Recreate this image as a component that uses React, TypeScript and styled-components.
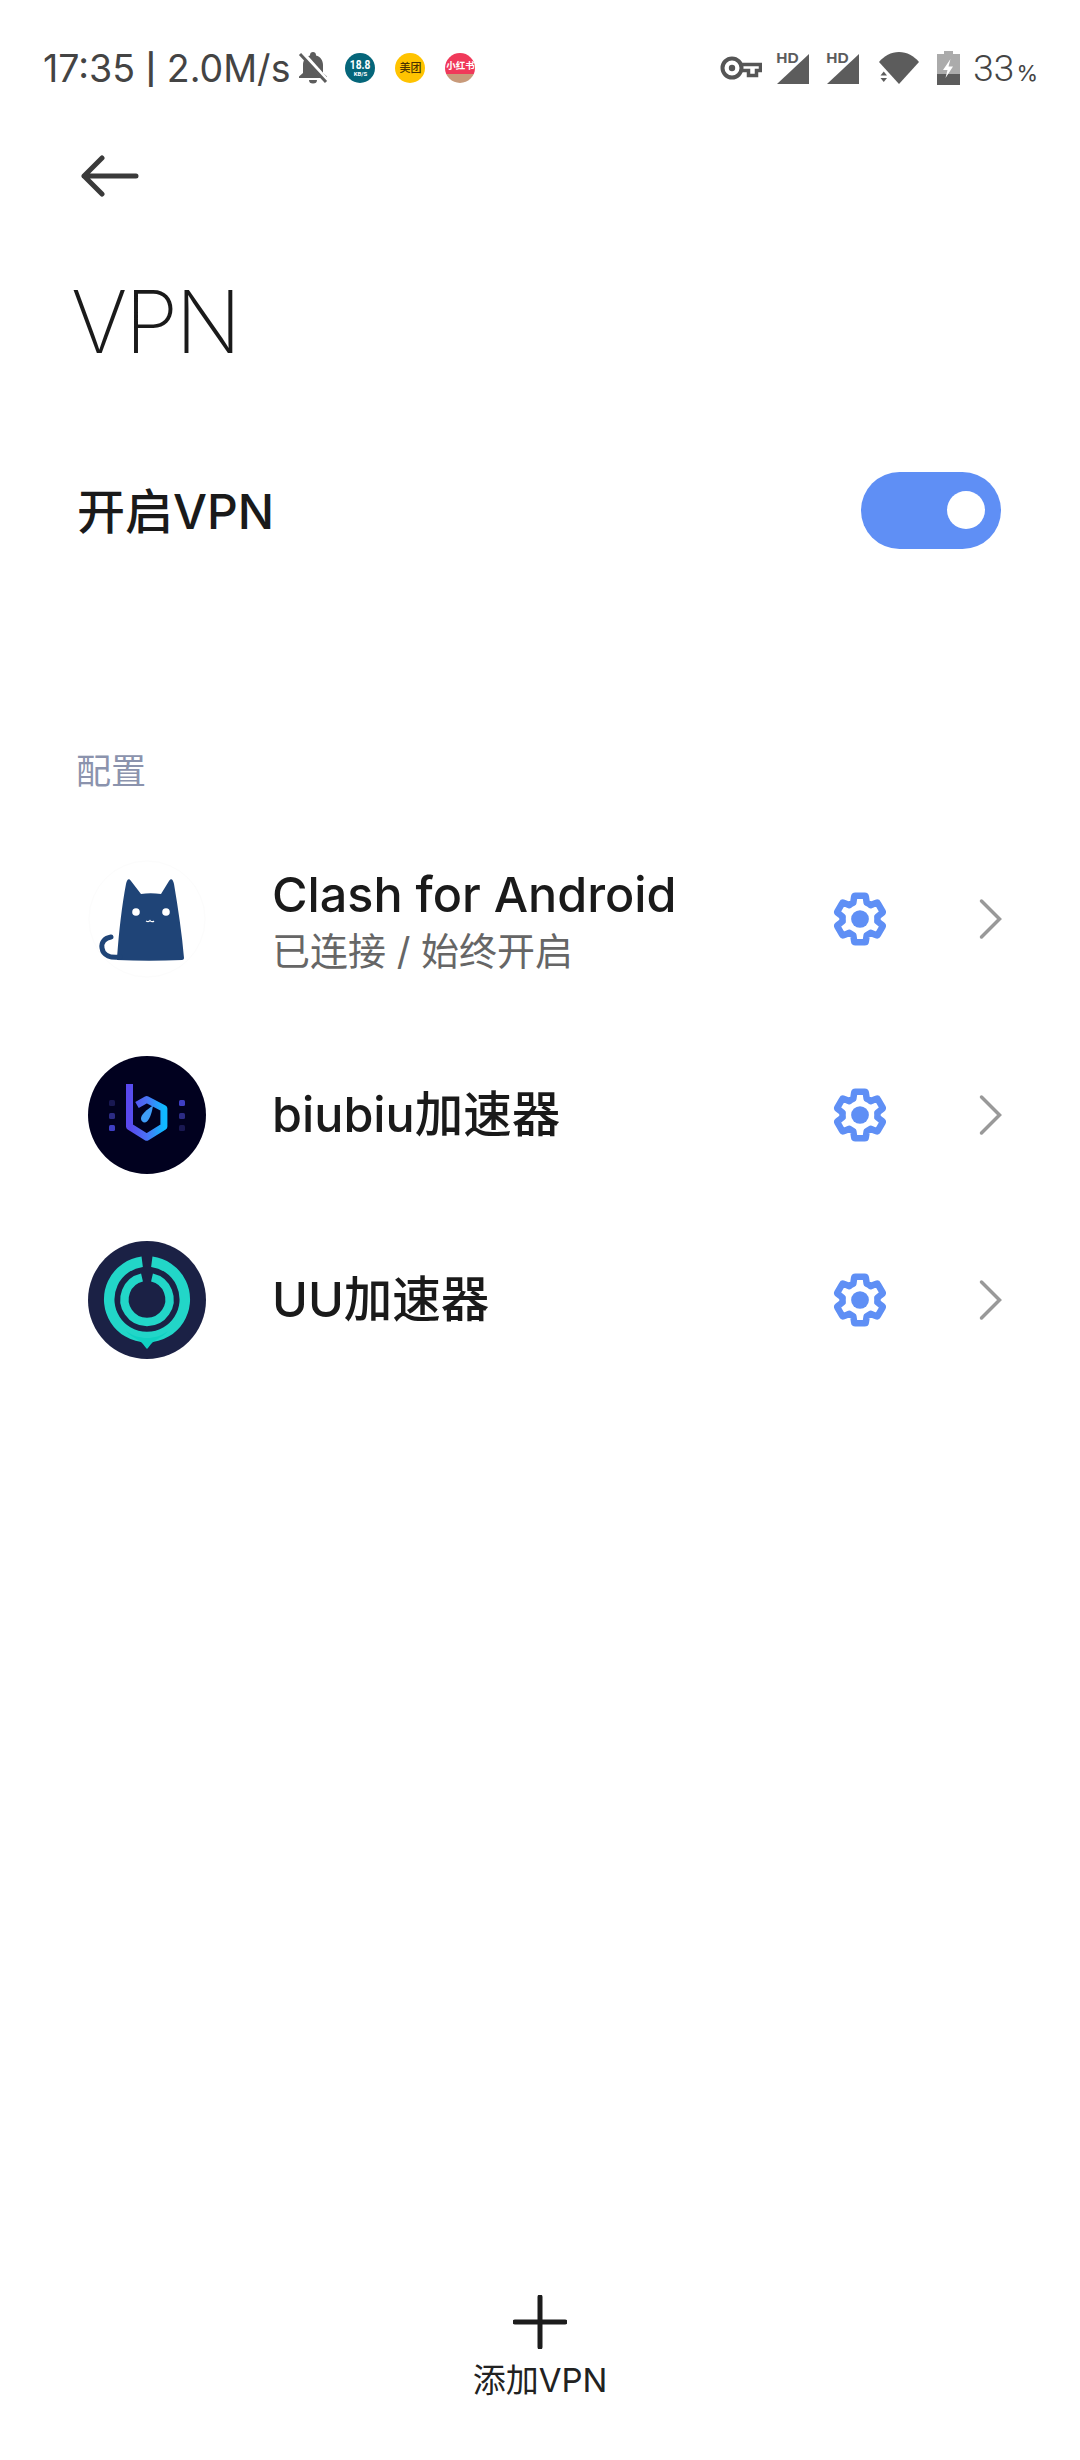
import styled, { createGlobalStyle } from "styled-components";

const GlobalStyle = createGlobalStyle`
  html, body {
    margin: 0;
    padding: 0;
    background: #fff;
  }
  body {
    font-family: Inter, "Noto Sans CJK SC", sans-serif;
  }
`;

const profiles = [
  { id: "clash", name: "Clash for Android", status: "已连接 / 始终开启" },
  { id: "biubiu", name: "biubiu加速器" },
  { id: "uu", name: "UU加速器" },
];

function SlashedBell() {
  return (
    <svg width="30" height="34" viewBox="0 0 30 34">
      <path
        d="M15 1c-1.700 0-3 1.300-3 3v.600C7.500 5.800 5 9.600 5 14v8l-4 3.500V27h28v-1.500L25 22v-8c0-4.400-2.500-8.200-7-9.400V4c0-1.700-1.300-3-3-3z"
        fill="#5c5c5c"
      />
      <path d="M11 29h8a4 3.500 0 0 1-8 0z" fill="#5c5c5c" />
      <path d="M4 2l25 28" stroke="#fff" strokeWidth="5" />
      <path d="M2 3l26 28" stroke="#5c5c5c" strokeWidth="3" />
    </svg>
  );
}

function KeyIcon() {
  return (
    <svg width="42" height="24" viewBox="0 0 42 24">
      <circle cx="12" cy="12" r="9.500" fill="none" stroke="#555" strokeWidth="4" />
      <circle cx="12" cy="12" r="3.200" fill="#555" />
      <path d="M22 8.500h18.500v6h-4v5h-8v-5H22" fill="none" stroke="#555" strokeWidth="3.500" />
    </svg>
  );
}

function SignalIcon() {
  return (
    <SignalWrap>
      <svg width="36" height="32" viewBox="0 0 36 32">
        <path d="M2 32L34 2v30z" fill="#5c5c5c" />
      </svg>
      <HdLabel>HD</HdLabel>
    </SignalWrap>
  );
}

function WifiIcon() {
  return (
    <svg width="42" height="34" viewBox="0 0 42 34">
      <path d="M1 11C6 5 13 1 21 1s15 4 20 10L21 33z" fill="#5c5c5c" />
      <path d="M2.500 24.500h6.500l-3.250-4zM2.500 27h6.500l-3.250 4z" fill="#5c5c5c" />
    </svg>
  );
}

function BatteryIcon() {
  return (
    <svg width="23" height="34" viewBox="0 0 23 34">
      <path d="M7 0h9v3h7v22H0V3h7z" fill="#ababab" />
      <path d="M0 23h23v11H0z" fill="#5c5c5c" />
      <path d="M13.500 8L6 19h4.500l-2 8L16 15.500h-4.500z" fill="#fff" />
    </svg>
  );
}

function GearIcon() {
  return (
    <svg width="56" height="56" viewBox="0 0 24 24">
      <path
        d="M19.430 12.980c.040-.320.070-.640.070-.980s-.030-.660-.070-.980l2.110-1.650c.190-.150.240-.420.120-.640l-2-3.460c-.120-.220-.390-.300-.610-.220l-2.490 1c-.520-.400-1.080-.730-1.690-.980l-.380-2.650C14.460 2.180 14.250 2 14 2h-4c-.250 0-.460.180-.490.420l-.380 2.650c-.610.250-1.170.590-1.690.980l-2.490-1c-.230-.090-.490 0-.610.220l-2 3.460c-.130.220-.070.490.120.640l2.110 1.650c-.040.320-.070.650-.070.980s.030.660.070.980l-2.110 1.650c-.190.150-.240.420-.120.640l2 3.460c.120.220.390.300.610.220l2.490-1c.520.400 1.080.730 1.690.980l.380 2.650c.030.240.240.420.490.420h4c.250 0 .460-.180.490-.420l.380-2.650c.610-.250 1.170-.590 1.690-.980l2.490 1c.230.090.490 0 .610-.220l2-3.460c.120-.220.070-.490-.120-.640l-2.110-1.650z"
        fill="none"
        stroke="#5f8ff5"
        strokeWidth="2.800"
        strokeLinejoin="round"
      />
      <circle cx="12" cy="12" r="3.800" fill="#5f8ff5" />
    </svg>
  );
}

function Chevron() {
  return (
    <svg width="23" height="42" viewBox="0 0 23 42">
      <path d="M2.500 3l18 18-18 18" fill="none" stroke="#999" strokeWidth="3.500" strokeLinecap="round" />
    </svg>
  );
}

function ClashLogo() {
  return (
    <svg width="118" height="118" viewBox="0 0 118 118">
      <circle cx="59" cy="59" r="58" fill="#fff" stroke="#fcfcfc" />
      <path
        d="M29 98C31 70 34 45 38 24c1-5 3-6 5-3l10 13c6-1 13-1 20 0l8-13c2-3 4-2 5 3 4 24 8 50 10 74 0 1-1 2-2 2-22 1-44 1-65 0z"
        fill="#1f4477"
      />
      <path d="M32 97c-9 1-17-1-18-9-1-6 3-10 9-11" fill="none" stroke="#1f4477" strokeWidth="5" strokeLinecap="round" />
      <circle cx="48" cy="52" r="3.800" fill="#fff" />
      <circle cx="78" cy="52" r="3.800" fill="#fff" />
      <path d="M58 61c2 1 3 1 4-.500 1 1.500 3 1.500 4 .500" fill="none" stroke="#fff" strokeWidth="1.200" />
    </svg>
  );
}

function BiubiuLogo() {
  return (
    <svg width="118" height="118" viewBox="0 0 118 118">
      <defs>
        <linearGradient id="biuStroke" x1="0" y1="0" x2="1" y2="0">
          <stop offset="0" stopColor="#5a48ee" />
          <stop offset="0.500" stopColor="#4a72f5" />
          <stop offset="1" stopColor="#0fb9ff" />
        </linearGradient>
      </defs>
      <circle cx="59" cy="59" r="59" fill="#01011f" />
      <path
        d="M41.500 28v42.500l17.200 10.800 17.200-10.800V52.500L58.700 43.500 49 49"
        fill="none"
        stroke="url(#biuStroke)"
        strokeWidth="7"
        strokeLinejoin="round"
      />
      <path d="M65 49.500c-1 7-3 13-6 16-2.500 2-6 .500-6-3 0-4 6-9 12-13z" fill="#3f9df8" />
      <rect x="21" y="44" width="6" height="6" rx="1.500" fill="#191852" />
      <rect x="21" y="57" width="6" height="6" rx="1.500" fill="#2c2b85" />
      <rect x="21" y="69" width="6" height="6" rx="1.500" fill="#3f3fc4" />
      <rect x="91" y="44" width="6" height="6" rx="1.500" fill="#3f3fc4" />
      <rect x="91" y="57" width="6" height="6" rx="1.500" fill="#2c2b85" />
      <rect x="91" y="69" width="6" height="6" rx="1.500" fill="#191852" />
    </svg>
  );
}

function UULogo() {
  return (
    <svg width="118" height="118" viewBox="0 0 118 118">
      <circle cx="59" cy="59" r="59" fill="#1b2145" />
      <path d="M54.200 20.800A37.800 37.800 0 1 0 63.800 20.800" fill="none" stroke="#22d6c8" strokeWidth="10.500" />
      <path d="M54 36.500A22.500 22.500 0 1 0 64 36.500" fill="none" stroke="#22d6c8" strokeWidth="8.400" />
      <path d="M38 90c7 5 14 7 21 7s14-2 21-7c-6 7-14 9-16 12-2 2-3 4-5 6-2-2-3-4-5-6-2-3-10-5-16-12z" fill="#10d2c2" />
    </svg>
  );
}

const logos: Record<string, () => React.ReactElement> = {
  clash: ClashLogo,
  biubiu: BiubiuLogo,
  uu: UULogo,
};

export default function App() {
  return (
    <Page>
      <GlobalStyle />
      <StatusBar>
        <StatusLeft>
          <Clock>
            17:35 <Separator>|</Separator> 2.0M/s
          </Clock>
          <SlashedBell />
          <Badges>
            <SpeedBadge>
              <strong>18.8</strong>
              <span>KB/S</span>
            </SpeedBadge>
            <MeituanBadge>美团</MeituanBadge>
            <RedBookBadge>小红书</RedBookBadge>
          </Badges>
        </StatusLeft>
        <StatusRight>
          <StatusSlot $gap={0}>
            <KeyIcon />
          </StatusSlot>
          <StatusSlot $gap={13}>
            <SignalIcon />
          </StatusSlot>
          <StatusSlot $gap={14}>
            <SignalIcon />
          </StatusSlot>
          <StatusSlot $gap={17}>
            <WifiIcon />
          </StatusSlot>
          <StatusSlot $gap={17}>
            <BatteryIcon />
          </StatusSlot>
          <StatusSlot $gap={13}>
            <BatteryText>
              33<small>%</small>
            </BatteryText>
          </StatusSlot>
        </StatusRight>
      </StatusBar>

      <BackButton>
        <svg width="58" height="42" viewBox="0 0 58 42">
          <path d="M55 21H3M21 3L3 21l18 18" fill="none" stroke="#3a3a3a" strokeWidth="5" strokeLinecap="round" strokeLinejoin="round" />
        </svg>
      </BackButton>

      <Title>VPN</Title>

      <SwitchRow>
        <SwitchLabel>开启VPN</SwitchLabel>
        <Toggle>
          <Knob />
        </Toggle>
      </SwitchRow>

      <SectionLabel>配置</SectionLabel>

      <ProfileList>
        {profiles.map((p) => {
          const Logo = logos[p.id];
          return (
            <ProfileRow key={p.id} $tall={!!p.status}>
              <LogoSlot>
                <Logo />
              </LogoSlot>
              <ProfileText>
                <ProfileName>{p.name}</ProfileName>
                {p.status && <ProfileStatus>{p.status}</ProfileStatus>}
              </ProfileText>
              <GearSlot>
                <GearIcon />
              </GearSlot>
              <Chevron />
            </ProfileRow>
          );
        })}
      </ProfileList>

      <AddButton>
        <svg width="54" height="54" viewBox="0 0 54 54">
          <path d="M27 2v50M2 27h50" stroke="#1c1c1c" strokeWidth="5" strokeLinecap="round" />
        </svg>
        <AddLabel>添加VPN</AddLabel>
      </AddButton>
    </Page>
  );
}

const Page = styled.div`
  display: flex;
  flex-direction: column;
  height: 2460px;
  background: #fff;
  overflow: hidden;
`;

const StatusBar = styled.div`
  display: flex;
  justify-content: space-between;
  align-items: center;
  height: 136px;
  padding: 0 42px 0 43px;
  flex-shrink: 0;
`;

const StatusLeft = styled.div`
  display: flex;
  align-items: center;
  gap: 8px;
`;

const Clock = styled.span`
  font-size: 37.5px;
  color: #444;
  white-space: nowrap;
`;

const Separator = styled.span`
  font-size: 30px;
  font-weight: 600;
  vertical-align: 2px;
`;

const Badges = styled.div`
  display: flex;
  gap: 20px;
  margin-left: 9px;
`;

const RoundBadge = styled.div`
  display: flex;
  flex-direction: column;
  align-items: center;
  justify-content: center;
  width: 30px;
  height: 30px;
  border-radius: 50%;
  overflow: hidden;
  line-height: 1;
`;

const SpeedBadge = styled(RoundBadge)`
  background: #05667a;
  color: #fff;
  font-family: "Roboto", sans-serif;

  strong {
    font-size: 12px;
    transform: scaleX(0.85);
  }

  span {
    font-size: 6px;
    font-weight: 700;
  }
`;

const MeituanBadge = styled(RoundBadge)`
  background: #ffc300;
  color: #4a3200;
  font-size: 11px;
  font-weight: 500;
`;

const RedBookBadge = styled(RoundBadge)`
  background: linear-gradient(180deg, #f0395a 0 70%, #c89a7a 70% 100%);
  color: #fff;
  font-size: 9.5px;
  font-weight: 700;
  white-space: nowrap;
  padding-bottom: 4px;
  box-sizing: border-box;
`;

const StatusRight = styled.div`
  display: flex;
  align-items: center;
`;

const StatusSlot = styled.div<{ $gap: number }>`
  display: flex;
  align-items: center;
  margin-left: ${(p) => p.$gap}px;
`;

const SignalWrap = styled.div`
  position: relative;
  display: flex;
`;

const HdLabel = styled.span`
  position: absolute;
  top: -1px;
  left: 1px;
  font-family: "Liberation Sans", sans-serif;
  font-size: 15.5px;
  line-height: 14px;
  font-weight: 700;
  color: #5c5c5c;
`;

const BatteryText = styled.span`
  font-family: Roboto, sans-serif;
  font-size: 37px;
  font-weight: 300;
  color: #444;
  white-space: nowrap;

  small {
    font-family: Inter, sans-serif;
    font-size: 22px;
    font-weight: 400;
    margin-left: 2px;
  }
`;

const BackButton = styled.div`
  display: flex;
  align-items: center;
  height: 80px;
  padding-left: 81px;
  flex-shrink: 0;
`;

const Title = styled.h1`
  margin: 51px 0 0;
  padding-left: 71px;
  font-size: 86px;
  line-height: 110px;
  font-weight: 250;
  letter-spacing: -2.5px;
  color: #1a1a1a;
`;

const SwitchRow = styled.div`
  display: flex;
  justify-content: space-between;
  align-items: center;
  margin-top: 94px;
  height: 78px;
  padding: 0 79px 0 77px;
`;

const SwitchLabel = styled.span`
  font-size: 48px;
  font-weight: 450;
  color: #1a1a1a;
  margin-bottom: 4px;
`;

const Toggle = styled.div`
  display: flex;
  align-items: center;
  justify-content: flex-end;
  width: 140px;
  height: 77px;
  padding-right: 16px;
  box-sizing: border-box;
  border-radius: 39px;
  background: #5f8ff5;
`;

const Knob = styled.div`
  width: 38px;
  height: 38px;
  border-radius: 50%;
  background: #fff;
`;

const SectionLabel = styled.div`
  margin-top: 197px;
  padding-left: 76px;
  font-size: 35px;
  line-height: 50px;
  color: #8b93ad;
`;

const ProfileList = styled.div`
  display: flex;
  flex-direction: column;
  margin-top: 20px;
`;

const ProfileRow = styled.div<{ $tall: boolean }>`
  display: flex;
  align-items: center;
  height: ${(p) => (p.$tall ? 206 : 185.5)}px;
  padding: 0 78px 0 88px;
`;

const LogoSlot = styled.div`
  display: flex;
  width: 118px;
  height: 118px;
  margin-right: 66px;
`;

const ProfileText = styled.div`
  flex: 1;
  display: flex;
  flex-direction: column;
`;

const ProfileName = styled.div`
  font-size: 48.5px;
  line-height: 64px;
  font-weight: 450;
  color: #1a1a1a;
`;

const ProfileStatus = styled.div`
  font-size: 38px;
  line-height: 48px;
  color: #666;
`;

const GearSlot = styled.div`
  display: flex;
  margin-right: 91px;
`;

const AddButton = styled.div`
  display: flex;
  flex-direction: column;
  align-items: center;
  margin-top: auto;
  padding-bottom: 57px;
`;

const AddLabel = styled.div`
  margin-top: 8px;
  font-size: 33px;
  line-height: 46px;
  color: #222;
`;
